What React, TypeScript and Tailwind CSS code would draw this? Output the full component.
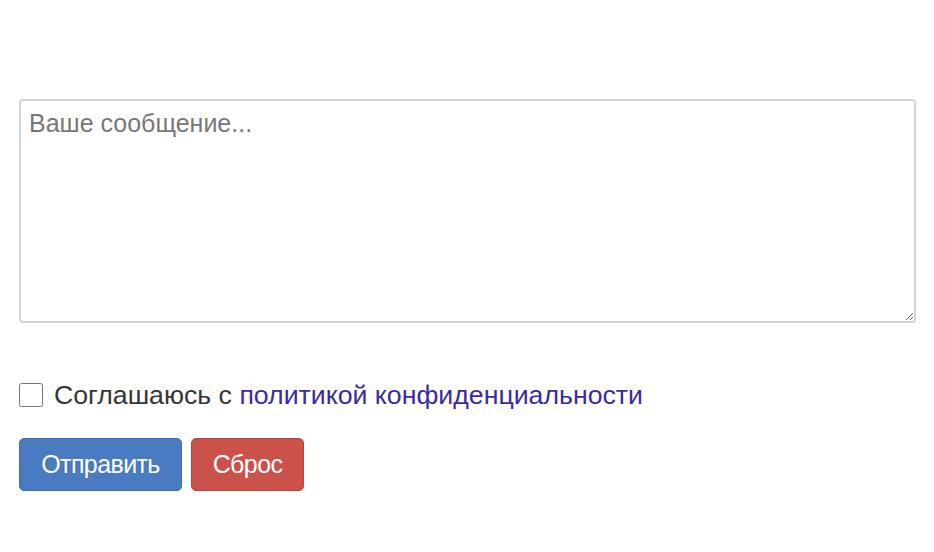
import React, { useState } from "react";

export default function App() {
  const [message, setMessage] = useState("");
  const [agree, setAgree] = useState(false);

  return (
    <div className="min-h-[552px] bg-white pt-[99px] pl-[19px] pr-[18px] font-['Liberation_Sans',Arial,sans-serif] text-[#363636]">
      <form onSubmit={(e) => e.preventDefault()} onReset={() => { setMessage(""); setAgree(false); }}>
        {/* Message */}
        <textarea
          value={message}
          onChange={(e) => setMessage(e.target.value)}
          placeholder="Ваше сообщение..."
          className="block w-[897px] h-[224px] rounded-[4px] border-2 border-[#d4d4d4] px-[8px] py-[6px] text-[25px] leading-[32px] text-[#555] placeholder:text-[#777] outline-none"
        />

        {/* Consent */}
        <label className="mt-[56px] flex items-center gap-[11px] text-[26.7px] leading-[32px]">
          <input
            type="checkbox"
            checked={agree}
            onChange={(e) => setAgree(e.target.checked)}
            className="w-[24px] h-[24px] m-0 accent-[#4a78c0]"
          />
          <span>
            Соглашаюсь с{" "}
            <a href="#" className="text-[#3a2c9e]">
              политикой конфиденциальности
            </a>
          </span>
        </label>

        {/* Actions */}
        <div className="mt-[27px] flex gap-[9px]">
          <button
            type="submit"
            className="h-[53px] w-[163px] rounded-[5px] border border-[#3f6aae] bg-[#4a7ac2] text-white text-[25px] tracking-[-0.6px]"
          >
            Отправить
          </button>
          <button
            type="reset"
            className="h-[53px] w-[113px] rounded-[5px] border border-[#b5423d] bg-[#cb514b] text-white text-[25px] tracking-[-0.6px]"
          >
            Сброс
          </button>
        </div>
      </form>
    </div>
  );
}
